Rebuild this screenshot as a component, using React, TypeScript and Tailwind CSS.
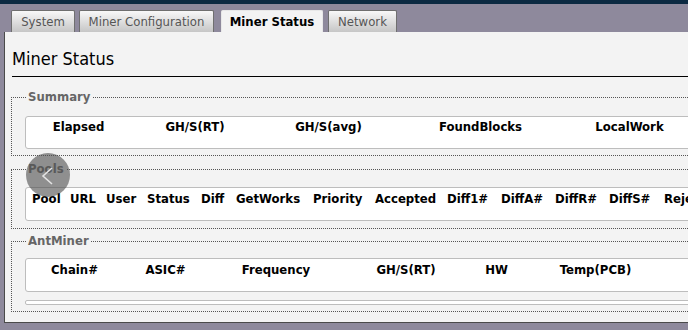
import React from "react";

const font = { fontFamily: '"DejaVu Sans Condensed", "DejaVu Sans", Tahoma, sans-serif' };

function Tab({ label, w, active, ml }: { label: string; w: string; active?: boolean; ml: string }) {
  return (
    <div
      className={`${w} ${ml} h-[22px] flex items-center justify-center text-[13px] border border-b-0 rounded-t-[2px] ${
        active
          ? "bg-[#f3f3f3] border-[#e8e8e8] text-black font-bold"
          : "bg-gradient-to-b from-[#f8f8f8] to-[#c6c6c6] border-[#6f6f6f] text-[#555]"
      }`}
    >
      {label}
    </div>
  );
}

export default function App() {
  const summary = [
    ["Elapsed", "w-[105px]"],
    ["GH/S(RT)", "w-[128px]"],
    ["GH/S(avg)", "w-[139px]"],
    ["FoundBlocks", "w-[165px]"],
    ["LocalWork", "w-[133px]"],
  ];
  const pools = [
    ["Pool", "w-[38px]"],
    ["URL", "w-[36px]"],
    ["User", "w-[41px]"],
    ["Status", "w-[54px]"],
    ["Diff", "w-[35px]"],
    ["GetWorks", "w-[77px]"],
    ["Priority", "w-[62px]"],
    ["Accepted", "w-[72px]"],
    ["Diff1#", "w-[54px]"],
    ["DiffA#", "w-[54px]"],
    ["DiffR#", "w-[54px]"],
    ["DiffS#", "w-[55px]"],
    ["Rejected", "w-[80px]"],
  ];
  const ant = [
    ["Chain#", "w-[97px]"],
    ["ASIC#", "w-[85px]"],
    ["Frequency", "w-[136px]"],
    ["GH/S(RT)", "w-[124px]"],
    ["HW", "w-[57px]"],
    ["Temp(PCB)", "w-[141px]"],
  ];
  return (
    <div className="w-[688px] h-[330px] overflow-hidden bg-[#8e899c] relative" style={font}>
      <div className="h-[4px] bg-[#0c2a42]" />
      <div className="flex items-end pt-[6px] pl-[11px] h-[28px]">
        <Tab label="System" w="w-[64px]" ml="ml-0" />
        <Tab label="Miner Configuration" w="w-[135px]" ml="ml-[4px]" />
        <Tab label="Miner Status" w="w-[102px]" ml="ml-[7px]" active />
        <Tab label="Network" w="w-[69px]" ml="ml-[5px]" />
      </div>
      <div className="ml-[4px] w-[780px] h-[291px] bg-[#f3f3f3] border-l border-b border-[#4a4a4a]">
        <div className="ml-[7px] pt-[17px] pb-[7px] border-b border-black text-[18px] leading-[20px] text-black">
          Miner Status
        </div>

        <fieldset className="ml-[6px] mt-[12px] border border-dotted border-[#555] pl-[13px] pb-[6px] h-[67px]">
          <legend className="ml-[1px] px-[2px] text-[13px] leading-[16px] font-bold text-[#666]">Summary</legend>
          <div className="mt-[11px] h-[33px] bg-white border border-[#bdbdbd] rounded-[3px] flex pt-[2px] text-[13px] leading-[16px] font-bold text-black">
            {summary.map(([t, w]) => (
              <div key={t} className={`${w} shrink-0 text-center`}>{t}</div>
            ))}
          </div>
        </fieldset>

        <fieldset className="ml-[6px] mt-[5px] border border-dotted border-[#555] pl-[13px] h-[68px]">
          <legend className="ml-[1px] px-[2px] text-[13px] leading-[16px] font-bold text-[#666]">Pools</legend>
          <div className="mt-[10px] h-[34px] bg-white border border-[#bdbdbd] rounded-[3px] flex pl-[6px] pt-[3px] text-[13px] leading-[16px] font-bold text-black whitespace-nowrap">
            {pools.map(([t, w]) => (
              <div key={t} className={`${w} shrink-0`}>{t}</div>
            ))}
          </div>
        </fieldset>

        <fieldset className="ml-[6px] mt-[4px] border border-dotted border-[#555] pl-[13px] h-[79px]">
          <legend className="ml-[1px] px-[2px] text-[13px] leading-[16px] font-bold text-[#666]">AntMiner</legend>
          <div className="mt-[9px] h-[34px] bg-white border border-[#bdbdbd] rounded-[3px] flex pt-[3px] text-[13px] leading-[16px] font-bold text-black">
            {ant.map(([t, w]) => (
              <div key={t} className={`${w} shrink-0 text-center`}>{t}</div>
            ))}
          </div>
          <div className="mt-[8px] h-[5px] bg-white border border-[#bdbdbd] rounded-[2px]" />
        </fieldset>
      </div>

      <div className="absolute left-[26px] top-[153px] w-[44px] h-[44px] rounded-full bg-[rgba(80,80,80,0.62)] flex items-center justify-center">
        <svg width="44" height="44" viewBox="0 0 44 44">
          <path d="M26 15 L17 23 L26 31" fill="none" stroke="#e4e4e4" strokeWidth="1.6" />
        </svg>
      </div>
    </div>
  );
}
